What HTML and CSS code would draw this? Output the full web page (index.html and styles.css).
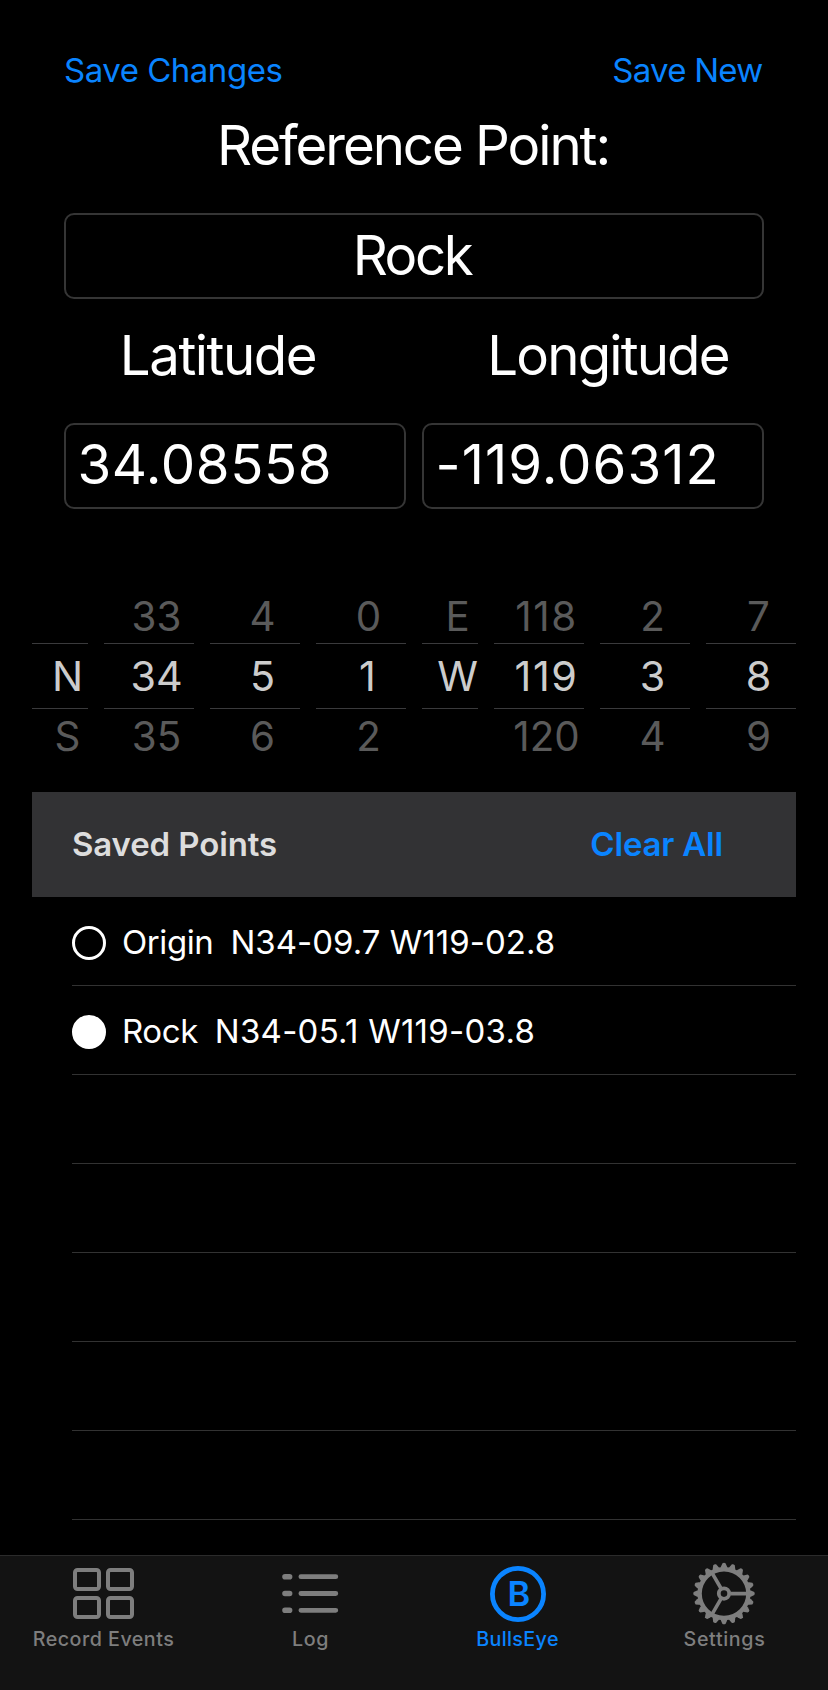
FILE: index.html
```
<!DOCTYPE html>
<html lang="en">
<head>
<meta charset="utf-8">
<meta name="viewport" content="width=device-width, initial-scale=1">
<title>BullsEye</title>
<link rel="stylesheet" href="styles.css">
</head>
<body>
<div class="app">
  <header class="actions">
    <a class="link save-changes">Save Changes</a>
    <a class="link save-new">Save New</a>
  </header>
  <h1 class="title">Reference Point:</h1>
  <div class="field field-name"><span class="word">Rock</span></div>
  <div class="labels">
    <span class="label lat">Latitude</span>
    <span class="label lon">Longitude</span>
  </div>
  <div class="coords">
    <div class="field field-num"><span class="num">34.08558</span></div>
    <div class="field field-num"><span class="num num-lon">-119.06312</span></div>
  </div>

  <div class="picker">
    <div class="wheel"><span class="side"></span><span class="now">N</span><span class="side next">S</span></div>
    <div class="wheel"><span class="side">33</span><span class="now">34</span><span class="side next">35</span></div>
    <div class="wheel"><span class="side">4</span><span class="now">5</span><span class="side next">6</span></div>
    <div class="wheel"><span class="side">0</span><span class="now one">1</span><span class="side next">2</span></div>
    <div class="wheel"><span class="side">E</span><span class="now narrow">W</span><span class="side next"></span></div>
    <div class="wheel"><span class="side wide">118</span><span class="now wide">119</span><span class="side next">120</span></div>
    <div class="wheel"><span class="side">2</span><span class="now">3</span><span class="side next">4</span></div>
    <div class="wheel"><span class="side">7</span><span class="now">8</span><span class="side next">9</span></div>
  </div>

  <section class="saved">
    <div class="saved-head">
      <h2 class="saved-title">Saved Points</h2>
      <a class="link clear">Clear All</a>
    </div>
    <ul class="points">
      <li class="point"><span class="radio"></span><span class="point-name">Origin</span> <span class="point-pos">N34-09.7 W119-02.8</span></li>
      <li class="point"><span class="radio on"></span><span class="point-name">Rock</span> <span class="point-pos loose">N34-05.1 W119-03.8</span></li>
      <li class="point"></li>
      <li class="point"></li>
      <li class="point"></li>
      <li class="point"></li>
      <li class="point"></li>
    </ul>
  </section>

  <nav class="tabs">
    <a class="tab">
      <svg class="icon" width="64" height="64" viewBox="-32 -32 64 64" fill="none" stroke="currentColor" stroke-width="4">
        <rect x="-28" y="-23" width="24" height="19" rx="2.5"/>
        <rect x="5" y="-23" width="24" height="19" rx="2.5"/>
        <rect x="-28" y="5" width="24" height="19" rx="2.5"/>
        <rect x="5" y="5" width="24" height="19" rx="2.5"/>
      </svg>
      <span class="tab-text">Record Events</span>
    </a>
    <a class="tab">
      <svg class="icon" width="64" height="64" viewBox="-32 -32 64 64" stroke="currentColor" stroke-linecap="round">
        <path stroke-width="5.6" d="M-25 -16.3h4.6M-25 .5h4.6M-25 17.3h4.6"/>
        <path stroke-width="4.8" d="M-9.1 -16.3h34.9M-9.1 .5h34.9M-9.1 17.3h34.9"/>
      </svg>
      <span class="tab-text log">Log</span>
    </a>
    <a class="tab active">
      <svg class="icon" width="64" height="64" viewBox="-32 -32 64 64">
        <circle cx="1" cy="1" r="25.6" fill="none" stroke="currentColor" stroke-width="4.8"/>
        <text class="glyph" x="1.8" y="13.3" text-anchor="middle">B</text>
      </svg>
      <span class="tab-text eye">BullsEye</span>
    </a>
    <a class="tab">
      <svg class="icon" width="64" height="64" viewBox="-32 -32 64 64" fill="none" stroke="currentColor">
        <defs>
          <path id="tooth" d="M25 -3.6L27.4 -2.9L30.3 -1.5Q31.2 0 30.3 1.5L27.4 2.9L25 3.6Z" fill="currentColor" stroke="none"/>
          <g id="teeth"><use href="#tooth"/><use href="#tooth" transform="rotate(18)"/><use href="#tooth" transform="rotate(36)"/><use href="#tooth" transform="rotate(54)"/><use href="#tooth" transform="rotate(72)"/></g>
        </defs>
        <g transform="translate(0 .6)">
          <circle r="24.4" stroke-width="4.4"/>
          <circle r="5.2" stroke-width="3.8"/>
          <path stroke-width="3.6" d="M6.5 0H24M-3.2 -5.6L-12 -20.8M-3.2 5.6L-12 20.8"/>
          <use href="#teeth"/><use href="#teeth" transform="rotate(90)"/><use href="#teeth" transform="rotate(180)"/><use href="#teeth" transform="rotate(270)"/>
        </g>
      </svg>
      <span class="tab-text settings">Settings</span>
    </a>
  </nav>
</div>
</body>
</html>
```
FILE: styles.css
```
* { box-sizing: border-box; }
body {
  margin: 0;
  background: #000;
  color: #fff;
  font-family: Inter, "Liberation Sans", sans-serif;
}
.app {
  display: flex;
  flex-direction: column;
  height: 1690px;
  overflow: hidden;
}
.link { color: #0a84ff; }

.actions {
  display: flex;
  justify-content: space-between;
  height: 60px;
  margin-top: 40px;
  padding: 0 65.5px 0 64px;
  font-size: 33px;
  line-height: 60px;
}
.save-changes { letter-spacing: -.49px; }
.save-new { letter-spacing: -.75px; }

.title {
  margin: 0;
  height: 113px;
  padding-right: 2px;
  font-size: 54.6px;
  font-weight: 400;
  line-height: 90px;
  letter-spacing: -2.06px;
  text-align: center;
}
.field {
  height: 86px;
  border: 2px solid #353535;
  border-radius: 10px;
  font-size: 54.6px;
  line-height: 80px;
}
.field-name {
  margin: 0 64px;
  padding-right: 4px;
  text-align: center;
}
.field-num {
  padding-left: 11.5px;
  line-height: 79px;
}
.word { letter-spacing: -2.4px; }
.labels {
  display: grid;
  grid-template-columns: 1fr 1fr;
  height: 124px;
  padding: 0 25px 0 23px;
  font-size: 54.6px;
  line-height: 112px;
  text-align: center;
}
.lat { letter-spacing: -1.45px; }
.lon { letter-spacing: -1.85px; }
.coords {
  display: grid;
  grid-template-columns: 1fr 1fr;
  gap: 16px;
  padding: 0 64px;
}
.num { letter-spacing: .6px; }
.num-lon { letter-spacing: 1.05px; }

.picker {
  display: grid;
  grid-template-columns: 56px 90px 90px 90px 56px 90px 90px 90px;
  gap: 16px;
  margin-top: 79px;
  padding: 0 32px;
  font-size: 41.3px;
}
.wheel {
  display: flex;
  flex-direction: column;
  text-align: center;
}
.wheel span {
  padding-left: 15px;
  white-space: nowrap;
}
.side {
  height: 55px;
  color: #5a5a5a;
  font-size: 40.3px;
  line-height: 57px;
}
.next { line-height: 55px; }
.now {
  height: 66px;
  border-top: 1px solid #3a3a3c;
  border-bottom: 1px solid #3a3a3c;
  color: #ccc;
  line-height: 64px;
}
.wheel .narrow { padding-left: 14px; letter-spacing: -1px; }
.wheel .one { padding-left: 13px; }
.wide { letter-spacing: 1.6px; }

.saved {
  flex: 1;
  margin: 28px 32px 0;
  overflow: hidden;
}
.saved-head {
  display: flex;
  justify-content: space-between;
  height: 105px;
  padding: 0 73px 0 40px;
  background: #323234;
  font-size: 33px;
  font-weight: 600;
  line-height: 104px;
}
.saved-title {
  margin: 0;
  color: #ddd;
  font-size: inherit;
  font-weight: inherit;
  letter-spacing: -.13px;
}
.clear { letter-spacing: -.2px; }
.points {
  margin: 0;
  padding: 0 0 0 40px;
  list-style: none;
}
.point {
  display: flex;
  align-items: center;
  height: 89px;
  padding-top: 3px;
  border-bottom: 1px solid #323232;
  font-size: 33px;
}
.radio {
  width: 34px;
  height: 34px;
  margin-right: 16px;
  border: 3px solid #fff;
  border-radius: 50%;
}
.on { background: #fff; }
.point-name,
.point-pos {
  margin-top: -2px;
  line-height: 40px;
}
.point-name {
  margin-right: 17px;
  letter-spacing: -.42px;
}
.point-pos { letter-spacing: .03px; }
.loose { letter-spacing: .25px; }

.tabs {
  display: grid;
  grid-template-columns: repeat(4, 1fr);
  height: 135px;
  border-top: 1px solid #2b2b2b;
  background: #131313;
  color: #7e7e7e;
}
.tab {
  display: flex;
  flex-direction: column;
  align-items: center;
  padding: 5px 1px 0 0;
}
.active { color: #0a84ff; }
.icon { display: block; }
.glyph {
  fill: currentColor;
  font-size: 34.5px;
  font-weight: 600;
}
.tab-text {
  margin-left: 1px;
  font-size: 19.7px;
  font-weight: 500;
  line-height: 28px;
  letter-spacing: .47px;
}
.log { letter-spacing: .64px; }
.eye { letter-spacing: .37px; }
.settings { letter-spacing: .65px; }
```
